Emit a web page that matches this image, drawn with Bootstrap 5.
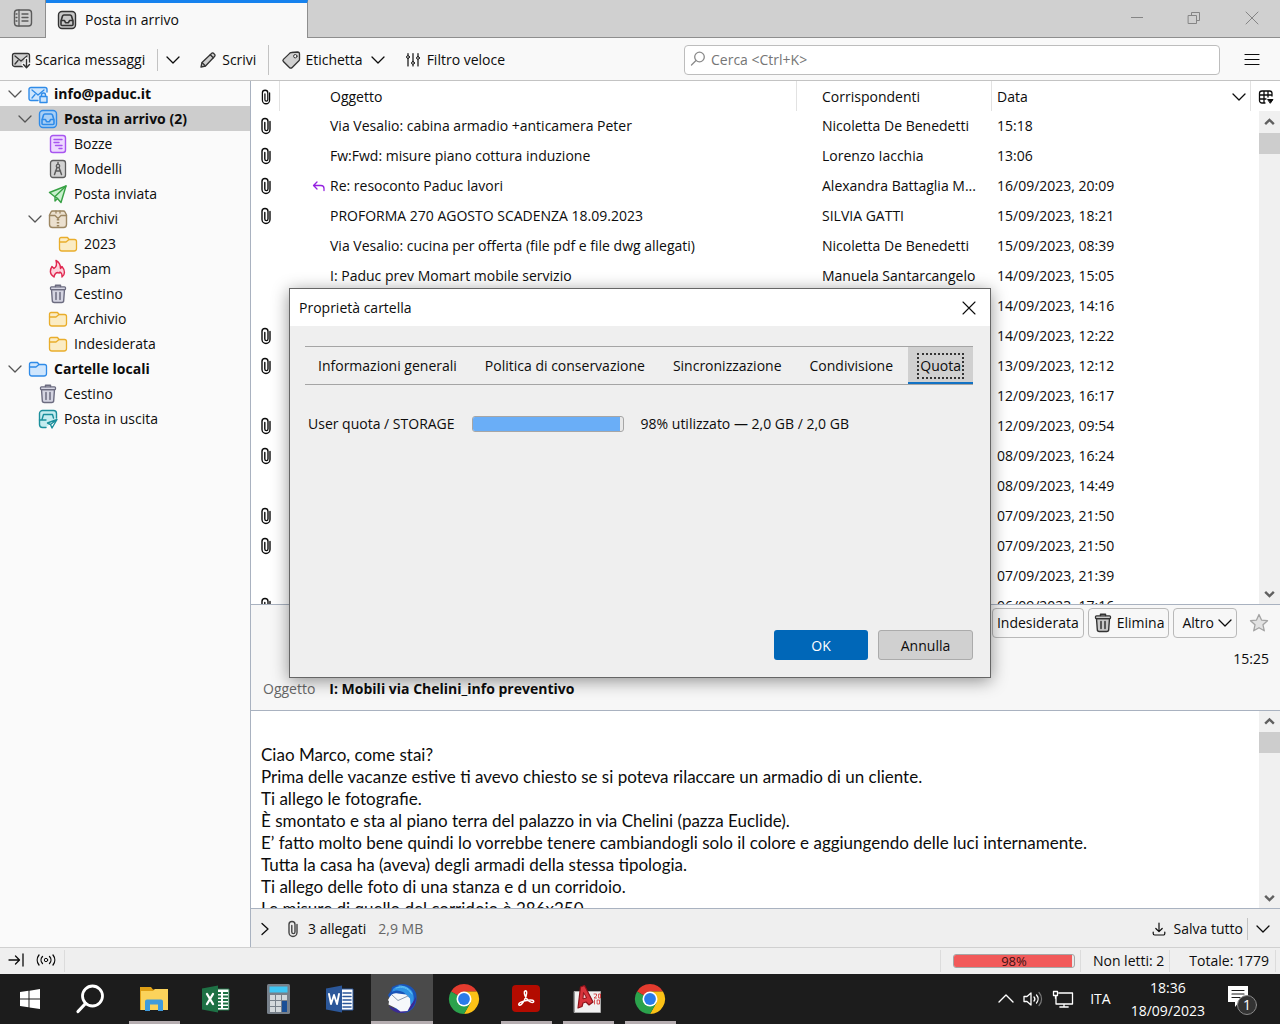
<!DOCTYPE html>
<html lang="it">
<head>
<meta charset="utf-8">
<meta name="viewport" content="width=device-width, initial-scale=1">
<title>Posta in arrivo</title>
<link href="https://cdn.jsdelivr.net/npm/bootstrap@5.3.0/dist/css/bootstrap.min.css" rel="stylesheet">
<style>
body{font-family:"Open Sans","Noto Sans",sans-serif;font-size:14px;line-height:20px;color:#0c0c0c;background:#f9f9f9}
button{color:inherit;background:none;border:0;padding:0}
svg{flex:none;display:block;fill:none;stroke:currentColor;stroke-linecap:round;stroke-linejoin:round}
.i14{width:14px;height:14px}.i16{width:16px;height:16px}.i20{width:20px;height:20px}
.app-shell{height:100vh;overflow:hidden;position:relative}
.titlebar{height:38px;background:#d0d0d0}
.tab-edge{border-bottom:1px solid #8e8e8e}
.spaces{width:46px;border-right:1px solid #8e8e8e;color:#5b5b5b}
.mail-tab{width:262px;background:#f9f9f9;border-top:3px solid #1682ee;border-right:1px solid #8e8e8e;padding:0 0 0 11px;margin-right:-1px;position:relative}
.winctl{color:#858585;width:57px}
.toolbar{height:43px;border-bottom:1px solid #c3c3c3;background:#f9f9f9;padding:2px 20px 0 11px}
.toolbar .gap-a{margin-left:18px}
.toolbar .gap-b{margin-left:12px}
.vsep{width:1px;height:22px;background:#c3c3c3}
.vsep.tall{height:30px}
.searchbox{height:30px;width:536px;border:1px solid #bdbdbd;border-radius:4px;background:#fff;font-size:14px;padding:0 8px 0 26px}
.searchbox::placeholder{color:#767676;opacity:1}
.searchwrap svg{position:absolute;left:6px;top:6px;color:#8a8a8a}
.folders{width:251px;border-right:1px solid #a9b2c0;background:#fafafa}
.folders li{height:25px;display:flex;align-items:center;gap:6px;padding-top:2px}
.folders li a{color:inherit;text-decoration:none;display:flex;align-items:center;gap:6px}
.folders .tw{color:#555;width:14px;height:14px}
.folders .lv0{padding-left:8px}.folders .lv1{padding-left:18px}.folders .lv2{padding-left:28px}
.folders .nt1{padding-left:38px}.folders .nt2{padding-left:48px}.folders .nt3{padding-left:58px}
.picked{background:#cdcdcd}
.c-blue{color:#2f8be8;--f:#cfe6fd}.c-purple{color:#a855f0;--f:#eed9ff}.c-gray{color:#5c5c5c;--f:#d2d2d2}.c-green{color:#36a043;--f:#c9f0cd}
.c-tan{color:#9c8662;--f:#ebe0cf}.c-yel{color:#e9ad2b;--f:#fbecc4}.c-red{color:#e02850;--f:#fcd3dc}.c-slate{color:#6c6c80;--f:#d5d5e2}.c-teal{color:#1b8f9c;--f:#c5ecef}.c-dark{color:#333;--f:#c9c9c9}
.picked .c-blue{--f:#a9cff5}
.pane-list{height:523px;background:#fff;position:relative;overflow:hidden}
.msgs{table-layout:fixed;width:100%;border-collapse:separate;border-spacing:0}
.msgs th{font-weight:400;height:30px;padding:2px 0 0;border-right:1px solid #e2e2e2;vertical-align:middle}
.msgs th:last-child{border-right:0}
.msgs td{height:30px;padding:0;white-space:nowrap;overflow:hidden}
.msgs .att{padding-left:8px}
.msgs .sub{padding-left:50px}
.msgs .who{padding-left:25px}
.msgs .dat{padding-left:5px}
.sub svg{position:absolute;margin-left:-19px;margin-top:3px;color:#9421e0}
.sbar{position:absolute;right:0;bottom:0;width:21px;background:#f0f0f0;color:#606060;display:flex;flex-direction:column;align-items:center}
.sbar .thumb{width:21px;height:21px;background:#cdcdcd}
.msghead{height:107px;border-top:1px solid #a9b2c0;border-bottom:1px solid #a9b2c0;background:#f7f7f7}
.tbtn{height:30px;border:1px solid #b9b9b9;border-radius:4px;white-space:nowrap}
.msgbody{background:#fff;position:relative;overflow:hidden;font-family:Lato,sans-serif;font-size:17px;line-height:22px;padding:33px 30px 0 10px}
.attbar{height:39px;border-top:1px solid #a9b2c0;background:#efefef;padding-top:1px}
.statusbar{height:27px;border-top:1px solid #d0d0d0;background:#efefef}
.statusbar .cellx{border-left:1px solid #dcdcdc;height:22px}
.meter{height:14px;border:1px solid #a6a6a6;border-radius:3px;background:#e8e8e8;position:relative;overflow:hidden}
.meter .progress-bar{transition:none}
.meter .cap{position:absolute;inset:0;text-align:center;line-height:13px;color:#401212;font-size:13px}
.taskbar{height:50px;background:#1c1c1c;color:#fff}
.task{width:62px;height:50px;position:relative;display:flex;align-items:center;justify-content:center}
.task.first{width:60px}
.task.run::after{content:"";position:absolute;bottom:0;left:6px;right:5px;height:3px;background:#b5adb0}
.task.cur{background:#4a4a4a}.task.cur::after{left:0;right:0}
.task svg{width:32px;height:32px}
.overlay{position:absolute;inset:0;padding-top:288px;pointer-events:none}
.dlg{width:702px;height:390px;background:#efefef;border:1px solid #666;box-shadow:0 3px 16px rgba(0,0,0,.42)}
.dlg-title{height:37px;background:#fff;padding:0 14px 0 9px}
.tabrow{margin:20px 17px 0 15px;border-top:1px solid #a5a5a5;border-bottom:1px solid #a5a5a5;height:39px}
.tabrow button{padding:0 15px 0 13px;white-space:nowrap}
.tabrow button.on{background:#d0d0d0;border-bottom:2px solid #1272c4;padding:0 11px;margin-left:auto}
.tabrow .on span{outline:2px dotted #333;display:block;padding:0 1px;line-height:22px;margin-top:2px;height:22px}
.dbtn{height:30px;border-radius:3px;padding-top:1px}
</style>
</head>
<body>
<svg width="0" height="0" class="position-absolute" aria-hidden="true">
<symbol id="clip" viewBox="0 0 14 20"><path d="M3 5v8.500a4 4 0 0 0 8 0V6.500M3 5.500a3 3 0 0 1 6 0v7.500a1.500 1.500 0 0 1-3.200 0V6.500M11 6.500V5.500" stroke-width="1.400"/></symbol>
<symbol id="down" viewBox="0 0 14 14"><path d="M1 4l6 6 6-6" stroke-width="1.300"/></symbol>
<symbol id="sb-up" viewBox="0 0 12 8"><path d="M2 6l4-4 4 4" stroke-width="2.200" stroke-linecap="butt" stroke-linejoin="miter"/></symbol>
<symbol id="sb-dn" viewBox="0 0 12 8"><path d="M2 2l4 4 4-4" stroke-width="2.200" stroke-linecap="butt" stroke-linejoin="miter"/></symbol>
<symbol id="inbox" viewBox="0 0 20 20"><rect x="1.500" y="1.500" width="17" height="17" rx="3.500" fill="var(--f)" stroke-width="1.400"/><path d="M4 11l1.500-5a1.500 1.500 0 0 1 1.400-1h6.200a1.500 1.500 0 0 1 1.400 1l1.500 5v3.500a1 1 0 0 1-1 1H5a1 1 0 0 1-1-1zM4 10.500h3.500l1 2.200h3l1-2.200H16" fill="var(--f)" stroke-width="1.600"/></symbol>
<symbol id="folder" viewBox="0 0 20 20"><path d="M1.500 5V14.500a2.500 2.500 0 0 0 2.500 2.500h12a2.500 2.500 0 0 0 2.500-2.500V7.500a2 2 0 0 0-2-2H11L9.500 3.500H3A1.500 1.500 0 0 0 1.500 5z" fill="var(--f)" stroke-width="1.300"/><path d="M1.500 8H8l3-2.500" stroke-width="1.300"/></symbol>
<symbol id="trash" viewBox="0 0 20 20"><path d="M3.500 5.500l.8 11a2 2 0 0 0 2 2h7.400a2 2 0 0 0 2-2l.8-11z" fill="var(--f)" stroke-width="1.400"/><rect x="2.500" y="2.800" width="15" height="2.900" rx="1" fill="var(--f)" stroke-width="1.300"/><path d="M7.500 2.500V1.300h5v1.200M8 8.500v7M12 8.500v7" stroke-width="1.500"/></symbol>
<symbol id="chrome" viewBox="0 0 32 32"><g stroke="none"><path d="M16 16L3 8.500A15 15 0 0 1 29 8.500H16z" fill="#e33b2e"/><path d="M29 8.500A15 15 0 0 1 16 31l6.500-11.500L16 8.500z" fill="#fbc116"/><path d="M3 8.500A15 15 0 0 0 16 31l6.500-11.300L16 16z" fill="#2ba24c"/><circle cx="16" cy="16" r="7.500" fill="#fff"/><circle cx="16" cy="16" r="5.900" fill="#2a7be9"/></g></symbol>
</svg>
<div class="app-shell d-flex flex-column">
  <header class="titlebar d-flex">
    <button class="spaces tab-edge d-flex align-items-center justify-content-center" aria-label="Spazi"><svg class="i20" viewBox="0 0 20 20"><rect x="1.500" y="2" width="17" height="16" rx="3" stroke-width="1.400"/><path d="M6 2v16M9 6h6M9 9.500h6M9 13h6M3 6h1M3 9.500h1M3 13h1" stroke-width="1.300"/></svg></button>
    <div class="mail-tab d-flex align-items-center"><svg class="i20 c-dark"><use href="#inbox"/></svg><span class="ms-2">Posta in arrivo</span></div>
    <div class="tab-edge flex-grow-1 d-flex justify-content-end">
      <button class="winctl d-flex align-items-center justify-content-center" aria-label="Riduci"><svg class="i16" viewBox="0 0 16 16"><path d="M1 7.500h12" shape-rendering="crispEdges"/></svg></button>
      <button class="winctl d-flex align-items-center justify-content-center" aria-label="Ripristina"><svg class="i16" viewBox="0 0 16 16"><path d="M1.500 5.500h8v8h-8zM4.500 5V2.500h8v8H10" stroke-linejoin="miter"/></svg></button>
      <button class="winctl d-flex align-items-center justify-content-center" aria-label="Chiudi"><svg class="i16" viewBox="0 0 16 16"><path d="M2 2l12 12M14 2L2 14"/></svg></button>
    </div>
  </header>
  <nav class="toolbar d-flex align-items-center flex-shrink-0">
    <button class="d-flex align-items-center gap-1 text-nowrap"><svg class="i20 c-dark" viewBox="0 0 20 20"><rect x="1.500" y="3.500" width="17" height="13" rx="2" fill="#d0d0d0" stroke-width="1.300"/><path d="M4 6l6 5 6-5M4 14l3-3.500" stroke-width="1.300"/><path d="M15.500 9.500v8M12.500 14.500l3 3.200 3-3.200" stroke="#f9f9f9" stroke-width="4"/><path d="M15.500 9.500v8M12.500 14.500l3 3.200 3-3.200" stroke-width="1.400"/></svg>Scarica messaggi</button>
    <span class="vsep gap-b"></span>
    <button class="ms-2" aria-label="Altri account"><svg class="i14"><use href="#down"/></svg></button>
    <button class="d-flex align-items-center gap-1 gap-a"><svg class="i20 c-dark" viewBox="0 0 20 20"><path d="M3 17l1-4.500L13.500 3.500a1.500 1.500 0 0 1 2.300 0l.7.700a1.500 1.500 0 0 1 0 2.300L7.500 16z" fill="#d0d0d0" stroke-width="1.300"/><path d="M12.300 4.800l3 3M4.200 12.800l3 3" stroke-width="1.300"/></svg>Scrivi</button>
    <span class="vsep tall gap-b"></span>
    <button class="d-flex align-items-center ms-2 ps-1"><svg class="i20 c-dark" viewBox="0 0 20 20"><path d="M10.500 2.500l6-.500a2 2 0 0 1 2 2v5.500a2 2 0 0 1-.6 1.300l-6.700 6.700a2 2 0 0 1-2.800 0l-6-6a1.500 1.500 0 0 1 0-2.100l6.500-6.300a2.500 2.500 0 0 1 1.600-.6z" fill="#d0d0d0" stroke-width="1.300"/><circle cx="14.300" cy="6.200" r="1.700" fill="#f9f9f9"/></svg><span class="ms-1">Etichetta</span><svg class="i14 ms-2"><use href="#down"/></svg></button>
    <button class="d-flex align-items-center gap-1 gap-a"><svg class="i20" viewBox="0 0 20 20"><path d="M5 3.500v1.500m0 3.500v7.500M10 3.500v8m0 3.500v1M15 3.500v3m0 3.500v6" stroke-width="1.200"/><circle cx="5" cy="7" r="1.400"/><circle cx="10" cy="13" r="1.400"/><circle cx="15" cy="8" r="1.400"/></svg>Filtro veloce</button>
    <div class="searchwrap position-relative ms-auto"><input type="search" class="searchbox" placeholder="Cerca &lt;Ctrl+K&gt;" aria-label="Cerca"><svg class="i16" viewBox="0 0 16 16"><circle cx="9.500" cy="6" r="4.800" stroke-width="1.300"/><path d="M6 9.500L1.500 14" stroke-width="1.300"/></svg></div>
    <button class="d-flex ms-4" aria-label="Menu"><svg class="i16" viewBox="0 0 16 16"><path d="M1 2.500h14M1 7.500h14M1 12.500h14" stroke-width="1.200"/></svg></button>
  </nav>

  <main class="d-flex flex-grow-1" style="min-height:0">
    <ul class="folders list-unstyled mb-0 flex-shrink-0">
      <li class="lv0 fw-bold"><svg class="tw"><use href="#down"/></svg><a href="#"><svg class="i20 c-blue" viewBox="0 0 20 20"><path d="M10 16.500H3a2 2 0 0 1-2-2v-9a2 2 0 0 1 2-2h14a2 2 0 0 1 2 2V8" fill="var(--f)" stroke-width="1.400"/><path d="M4 6l6 5 6-5M4 14l3-3.500" stroke-width="1.300"/><path d="M13.500 12.500v-1.500a2 2 0 0 1 4 0v1.500M12 12.500h7v6h-7z" fill="var(--f)" stroke-width="1.400"/></svg>info@paduc.it</a></li>
      <li class="lv1 picked fw-bold"><svg class="tw"><use href="#down"/></svg><a href="#"><svg class="i20 c-blue"><use href="#inbox"/></svg>Posta in arrivo (2)</a></li>
      <li class="nt2"><a href="#"><svg class="i20 c-purple" viewBox="0 0 20 20"><rect x="2.500" y="1.500" width="15" height="17" rx="2.500" fill="var(--f)" stroke-width="1.400"/><path d="M6 5.500h8M6 8.500h5M7.500 11.500H14M11 14.500h3" stroke-width="1.400"/></svg>Bozze</a></li>
      <li class="nt2"><a href="#"><svg class="i20 c-gray" viewBox="0 0 20 20"><rect x="2.500" y="1.500" width="15" height="17" rx="2.500" fill="var(--f)" stroke-width="1.300"/><path d="M9 8.500L6.500 15.500M11 8.500l2.500 7M7.500 12h5M10 3.500v1.500" stroke-width="1.500"/><circle cx="10" cy="7" r="1.700" stroke-width="1.300"/></svg>Modelli</a></li>
      <li class="nt2"><a href="#"><svg class="i20 c-green" viewBox="0 0 20 20"><path d="M18 2L1.500 8.500 6.500 12.500 9 14l4 4.500z" fill="var(--f)" stroke-width="1.400"/><path d="M18 2L7 12.500V17l2.500-2.500" stroke-width="1.400"/></svg>Posta inviata</a></li>
      <li class="lv2"><svg class="tw"><use href="#down"/></svg><a href="#"><svg class="i20 c-tan" viewBox="0 0 20 20"><path d="M1.500 6l1.500-3a2 2 0 0 1 1.800-1h10.400A2 2 0 0 1 17 3l1.500 3v9.500a3 3 0 0 1-3 3h-11a3 3 0 0 1-3-3z" fill="var(--f)" stroke-width="1.400"/><path d="M1.500 6.500H7l3 3 3-3h5.500M8 2v2M12 2v2" stroke-width="1.300"/><path d="M10 10v8" stroke-width="2.500" stroke-dasharray="1.500 1.500" stroke-linecap="butt"/></svg>Archivi</a></li>
      <li class="nt3"><a href="#"><svg class="i20 c-yel"><use href="#folder"/></svg>2023</a></li>
      <li class="nt2"><a href="#"><svg class="i20 c-red" viewBox="0 0 20 20"><path d="M6 18C1 15 2 10.500 4 7.500l2 2C8.500 8 9 5 8 1.500c4 2 4.500 4.500 4.500 8l1.500-2c3.500 4 3 8.500 0 10.500.500-2.500-.5-4-2-5-.5 1-1 1.500-2 .5-2.500 0-3.500 2-4 4.500z" fill="var(--f)" stroke-width="1.400"/></svg>Spam</a></li>
      <li class="nt2"><a href="#"><svg class="i20 c-slate"><use href="#trash"/></svg>Cestino</a></li>
      <li class="nt2"><a href="#"><svg class="i20 c-yel"><use href="#folder"/></svg>Archivio</a></li>
      <li class="nt2"><a href="#"><svg class="i20 c-yel"><use href="#folder"/></svg>Indesiderata</a></li>
      <li class="lv0 fw-bold"><svg class="tw"><use href="#down"/></svg><a href="#"><svg class="i20 c-blue"><use href="#folder"/></svg>Cartelle locali</a></li>
      <li class="nt1"><a href="#"><svg class="i20 c-slate"><use href="#trash"/></svg>Cestino</a></li>
      <li class="nt1"><a href="#"><svg class="i20 c-teal" viewBox="0 0 20 20"><path d="M8 18.500H4.500a3 3 0 0 1-3-3v-11a3 3 0 0 1 3-3h11a3 3 0 0 1 3 3V9" fill="var(--f)" stroke-width="1.400"/><path d="M4 10.500l1.500-5h9l1 3.500M1.500 11H8" stroke-width="1.400"/><path d="M19 10.500l-9.500 3.500 3 1.500 1.500 3.500zM12.500 15.500L19 10.500" fill="#fff" stroke-width="1.400"/></svg>Posta in uscita</a></li>
    </ul>

    <section class="flex-grow-1 d-flex flex-column" style="min-width:0">
      <div class="pane-list flex-shrink-0">
        <table class="msgs">
          <colgroup><col style="width:29px"><col><col style="width:195px"><col style="width:259px"><col style="width:29px"></colgroup>
          <thead><tr><th class="att"><svg width="14" height="18"><use href="#clip"/></svg></th><th class="sub">Oggetto</th><th class="who">Corrispondenti</th><th class="dat"><span class="d-flex align-items-center justify-content-between pe-1"><span>Data</span><svg class="i14"><use href="#down"/></svg></span></th><th><svg class="i16 mx-auto" viewBox="0 0 16 16"><path d="M7 14H4a2.500 2.500 0 0 1-2.500-2.500V4.500A2.500 2.500 0 0 1 4 2h7.500A2.500 2.500 0 0 1 14 4.500V7M1.500 6H14M1.500 10H8M6 2v12M10 2v6" stroke-width="1.300"/><path d="M10 10.500h5l-2.500 3.500z" fill="currentColor"/></svg></th></tr></thead>
          <tbody>
          <tr><td class="att"><svg width="14" height="20"><use href="#clip"/></svg></td><td class="sub">Via Vesalio: cabina armadio +anticamera Peter</td><td class="who">Nicoletta De Benedetti</td><td class="dat">15:18</td><td></td></tr>
          <tr><td class="att"><svg width="14" height="20"><use href="#clip"/></svg></td><td class="sub">Fw:Fwd: misure piano cottura induzione</td><td class="who">Lorenzo Iacchia</td><td class="dat">13:06</td><td></td></tr>
          <tr><td class="att"><svg width="14" height="20"><use href="#clip"/></svg></td><td class="sub"><svg width="14" height="14" viewBox="0 0 14 14"><path d="M6 3L2.500 6.500 6 10M2.500 6.500H10a3 3 0 0 1 3 3v2" stroke-width="1.300"/></svg>Re: resoconto Paduc lavori</td><td class="who">Alexandra Battaglia M...</td><td class="dat">16/09/2023, 20:09</td><td></td></tr>
          <tr><td class="att"><svg width="14" height="20"><use href="#clip"/></svg></td><td class="sub">PROFORMA 270 AGOSTO SCADENZA 18.09.2023</td><td class="who">SILVIA GATTI</td><td class="dat">15/09/2023, 18:21</td><td></td></tr>
          <tr><td></td><td class="sub">Via Vesalio: cucina per offerta (file pdf e file dwg allegati)</td><td class="who">Nicoletta De Benedetti</td><td class="dat">15/09/2023, 08:39</td><td></td></tr>
          <tr><td></td><td class="sub">I: Paduc prev Momart mobile servizio</td><td class="who">Manuela Santarcangelo</td><td class="dat">14/09/2023, 15:05</td><td></td></tr>
          <tr><td></td><td></td><td></td><td class="dat">14/09/2023, 14:16</td><td></td></tr>
          <tr><td class="att"><svg width="14" height="20"><use href="#clip"/></svg></td><td></td><td></td><td class="dat">14/09/2023, 12:22</td><td></td></tr>
          <tr><td class="att"><svg width="14" height="20"><use href="#clip"/></svg></td><td></td><td></td><td class="dat">13/09/2023, 12:12</td><td></td></tr>
          <tr><td></td><td></td><td></td><td class="dat">12/09/2023, 16:17</td><td></td></tr>
          <tr><td class="att"><svg width="14" height="20"><use href="#clip"/></svg></td><td></td><td></td><td class="dat">12/09/2023, 09:54</td><td></td></tr>
          <tr><td class="att"><svg width="14" height="20"><use href="#clip"/></svg></td><td></td><td></td><td class="dat">08/09/2023, 16:24</td><td></td></tr>
          <tr><td></td><td></td><td></td><td class="dat">08/09/2023, 14:49</td><td></td></tr>
          <tr><td class="att"><svg width="14" height="20"><use href="#clip"/></svg></td><td></td><td></td><td class="dat">07/09/2023, 21:50</td><td></td></tr>
          <tr><td class="att"><svg width="14" height="20"><use href="#clip"/></svg></td><td></td><td></td><td class="dat">07/09/2023, 21:50</td><td></td></tr>
          <tr><td></td><td></td><td></td><td class="dat">07/09/2023, 21:39</td><td></td></tr>
          <tr><td class="att"><svg width="14" height="20"><use href="#clip"/></svg></td><td></td><td></td><td class="dat">06/09/2023, 17:16</td><td></td></tr>
          </tbody>
        </table>
        <div class="sbar" style="top:30px"><svg width="13" height="22"><use href="#sb-up"/></svg><div class="thumb"></div><svg class="mt-auto" width="13" height="20"><use href="#sb-dn"/></svg></div>
      </div>

      <div class="msghead flex-shrink-0 d-flex flex-column">
        <div class="d-flex justify-content-end align-items-center" style="gap:4px;padding:3px 11px 0 0">
          <button class="tbtn px-1">Indesiderata</button>
          <button class="tbtn d-flex align-items-center px-1 gap-1"><svg class="i20 c-dark"><use href="#trash"/></svg>Elimina</button>
          <button class="tbtn d-flex align-items-center gap-1 px-1 me-2"><span class="ps-1">Altro</span><svg class="i14"><use href="#down"/></svg></button>
          <svg class="i20" viewBox="0 0 20 20" style="color:#a4a4a4"><path d="M10 1.500l2.500 5.600 6 .6-4.500 4.100 1.300 6L10 14.700l-5.300 3.100 1.300-6L1.500 7.700l6-.6z" fill="#e2e2e2" stroke-width="1.300"/></svg>
        </div>
        <div class="text-end" style="padding:11px 11px 0 0">15:25</div>
        <div class="d-flex" style="padding:10px 0 0 12px;gap:14px"><span style="color:#666">Oggetto</span><b>I: Mobili via Chelini_info preventivo</b></div>
      </div>

      <div class="msgbody flex-grow-1">
        <div class="text-nowrap">Ciao Marco, come stai?</div>
        <div class="text-nowrap">Prima delle vacanze estive ti avevo chiesto se si poteva rilaccare un armadio di un cliente.</div>
        <div class="text-nowrap">Ti allego le fotografie.</div>
        <div class="text-nowrap">È smontato e sta al piano terra del palazzo in via Chelini (pazza Euclide).</div>
        <div class="text-nowrap">E’ fatto molto bene quindi lo vorrebbe tenere cambiandogli solo il colore e aggiungendo delle luci internamente.</div>
        <div class="text-nowrap">Tutta la casa ha (aveva) degli armadi della stessa tipologia.</div>
        <div class="text-nowrap">Ti allego delle foto di una stanza e d un corridoio.</div>
        <div class="text-nowrap">Le misure di quello del corridoio è 286x250</div>
        <div class="sbar" style="top:0"><svg width="13" height="21"><use href="#sb-up"/></svg><div class="thumb"></div><svg class="mt-auto" width="13" height="20"><use href="#sb-dn"/></svg></div>
      </div>

      <div class="attbar flex-shrink-0 d-flex align-items-center">
        <button class="ms-2" aria-label="Espandi"><svg width="14" height="14" viewBox="0 0 14 14"><path d="M3 1.500l6 5.500-6 5.500" stroke-width="1.300"/></svg></button>
        <svg width="14" height="22" style="color:#444;margin-left:13px"><use href="#clip"/></svg><span class="ms-1 ps-1 pe-1">3 allegati</span><span class="ms-2 ps-0" style="color:#666">2,9 MB</span>
        <button class="ms-auto d-flex align-items-center gap-2"><svg width="14" height="14" viewBox="0 0 14 14"><path d="M7 1v8.500M3.800 6.500L7 9.700l3.200-3.200M1.200 10v1.500a1.500 1.500 0 0 0 1.500 1.500h8.600a1.500 1.500 0 0 0 1.500-1.500V10" stroke-width="1.200"/></svg>Salva tutto</button>
        <span class="vsep ms-1"></span>
        <button class="ms-2 me-2" style="padding-right:2px" aria-label="Altre azioni"><svg width="14" height="14"><use href="#down"/></svg></button>
      </div>
    </section>
  </main>

  <footer class="statusbar flex-shrink-0 d-flex align-items-center text-nowrap">
    <button class="ms-2" aria-label="Vai"><svg class="i16" viewBox="0 0 16 16"><path d="M1 7h10M7.500 3l4 4-4 4M15 1v12" stroke-width="1.300"/></svg></button>
    <button class="ms-2" style="padding-left:3px;padding-right:7px" aria-label="In linea"><svg width="22" height="16" viewBox="0 0 22 16"><circle cx="11" cy="7" r="1.700"/><path d="M7.500 3.500a5 5 0 0 0 0 7M14.500 3.500a5 5 0 0 1 0 7M4 2a8 8 0 0 0 0 10M18 2a8 8 0 0 1 0 10" stroke-width="1.300"/></svg></button>
    <span class="cellx"></span>
    <div class="cellx ms-auto d-flex align-items-center" style="padding:0 5px 0 12px"><div class="progress meter" style="width:122px" role="progressbar" aria-valuenow="98" aria-label="Quota"><div class="progress-bar" style="width:98%;background:#f25a5a"></div><span class="cap">98%</span></div></div>
    <div class="cellx d-flex align-items-center" style="padding:0 5px 0 12px">Non letti: 2</div>
    <div class="cellx d-flex align-items-center" style="padding:0 6px 0 19px">Totale: 1779</div>
    <span class="cellx pe-1"></span>
  </footer>

  <div class="taskbar flex-shrink-0 d-flex align-items-center">
    <button class="task first" aria-label="Start"><svg style="width:20px;height:20px" viewBox="0 0 20 20"><path d="M0 3l8.500-1.200v7.700H0zM9.500 1.700L20 0v9.500H9.500zM0 10.500h8.500v7.700L0 17zM9.500 10.500H20V20L9.500 18.400z" fill="#fff" stroke="none"/></svg></button>
    <button class="task first" style="margin-right:3px" aria-label="Cerca"><svg viewBox="0 0 32 32"><circle cx="18.500" cy="13" r="10" stroke-width="2.800"/><path d="M11.500 20.500L4 28.500" stroke-width="3.200"/></svg></button>
    <button class="task run" aria-label="Esplora file"><svg viewBox="0 0 32 32"><g stroke="none"><path d="M2 4h11l2 2.500h15V27H2z" fill="#dfa016"/><path d="M3 8h12l2-2h13v21H3z" fill="#fbd35b"/><path d="M7 28V18.500a2 2 0 0 1 2-2h14a2 2 0 0 1 2 2V28h-5v-6.500h-8V28z" fill="#3f9bdc"/></g></svg></button>
    <button class="task" aria-label="Excel"><svg viewBox="0 0 32 32"><path d="M16 6h13v21H16z" fill="#fff" stroke="#1e7145"/><path d="M18 10h3m2 0h5M18 13.500h3m2 0h5M18 17h3m2 0h5M18 20.500h3m2 0h5M18 24h3m2 0h5" stroke="#1e7145" stroke-width="2" stroke-linecap="butt"/><path d="M2 5.500L18 2.500v27L2 26.500z" fill="#1e7145" stroke="none"/><path d="M7 11l6 10M13 11L7 21" stroke="#fff" stroke-width="2.300"/></svg></button>
    <button class="task" aria-label="Calcolatrice"><svg viewBox="0 0 32 32"><g stroke="none"><rect x="5" y="1" width="23" height="30" rx="1.500" fill="#77808a"/><path d="M7.500 3.500h18v6h-18z" fill="#3ec5f3"/><path d="M8 12h5v5H8zM14 12h5v5h-5zM20 12h5v5h-5zM8 18h5v5H8zM14 18h5v5h-5zM8 24h5v5H8zM14 24h5v5h-5z" fill="#d3d8dc"/><path d="M20 18h5v11h-5z" fill="#1a4f96"/></g></svg></button>
    <button class="task" aria-label="Word"><svg viewBox="0 0 32 32"><path d="M16 6h13v21H16z" fill="#fff" stroke="#2b579a"/><path d="M19 10h8M19 13.500h8M19 17h8M19 20.500h8M19 24h8" stroke="#2b579a" stroke-width="1.500"/><path d="M2 5.500L18 2.500v27L2 26.500z" fill="#2b579a" stroke="none"/><path d="M5 11l2 10 3-9 3 9 2-10" stroke="#fff" stroke-width="1.900"/></svg></button>
    <button class="task run cur" aria-label="Thunderbird"><svg viewBox="0 0 32 32"><g stroke="none"><path d="M2 12L5 8l1-4 5-2c8-3 16 1 19 8 2 8-1 16-8 19-5 2-9 1-12-1z" fill="#1a54b8"/><path d="M7 6c6-5 14-4 19 2 3 6 2 13-2 17 1-8-2-13-7-16-4-2-8-2-11 0z" fill="#2f93e4"/><path d="M30 14c0 9-7 16-15 16-6 0-10-3-12-7l9 4c8 1 14-5 18-13z" fill="#3b2a94"/><path d="M4 13.500c2-3 5-4 8-3l8 1 4 4 .5 7-3 5.500-7 .5-4-3-8-4 .5-3L2 17z" fill="#f6f8fb"/></g><path d="M6 12l6 5.500L22 13" stroke="#8c9bb0" stroke-width="1"/><path d="M10 5c6-2 12 0 15 5M13 3c6 0 11 3 13 8" stroke="#5cbcf3" stroke-width="1"/></svg></button>
    <button class="task" aria-label="Chrome"><svg><use href="#chrome"/></svg></button>
    <button class="task run" aria-label="Acrobat"><svg viewBox="0 0 32 32"><rect x="2" y="2" width="28" height="27" rx="4" fill="#b30b00" stroke="none"/><path d="M15 8c2.500-1 2 4-.5 9-2 4-4.500 6-5.500 5-1.500-2 4-4 9-4.800 4-.7 6.500.3 5.500 1.800-1.200 1.500-5-.5-7-3.500C14.500 12.500 13.500 8.600 15 8z" stroke="#fff" stroke-width="1.500"/></svg></button>
    <button class="task run" aria-label="AutoCAD"><svg viewBox="0 0 32 32"><path d="M2.500 8.500h26v21h-26z" fill="#f1f1f1" stroke="#aaa"/><path d="M6 25L8.500 4l4-1.500L21 19l-4 3-3-3-3 1-1 3.500z" fill="#d8343c" stroke="#8c1219" stroke-width="1.200"/><path d="M11 15.500l.5-6 3 5z" fill="#f1d0d0" stroke="#8c1219"/><path d="M22 11h2.500v2L22 15h2.500M27 11h1.500v4H27zM22.500 17v4M25.500 17h2v4h-2z" stroke="#d02a2a" stroke-width=".8"/></svg></button>
    <button class="task run" aria-label="Chrome"><svg><use href="#chrome"/></svg></button>
    <div class="ms-auto d-flex align-items-center">
      <svg class="i16" viewBox="0 0 16 16"><path d="M1 11l7-7 7 7" stroke-width="1.400"/></svg>
      <svg class="ms-2 me-2" width="22" height="18" viewBox="0 0 22 18"><path d="M2 6.500h3l4-3.500v12l-4-3.500H2zM12 7a3 3 0 0 1 0 4M14.500 5a6 6 0 0 1 0 8" stroke-width="1.300"/><path d="M17 2.500a9.500 9.500 0 0 1 0 13" stroke="#777" stroke-width="1.200"/></svg>
      <svg width="22" height="20" viewBox="0 0 22 20"><path d="M7 4h13.500v11H4V8M12 15v3M8 18h8M1.500 2.500h4v4h-4zM3.500 6.500V9" stroke-width="1.300" stroke-linecap="square"/></svg>
      <span class="ms-3">ITA</span>
      <div class="text-center" style="margin-left:20px;line-height:23px">18:36<br>18/09/2023</div>
      <button style="margin:0 23px 0 22px" aria-label="Notifiche"><svg width="30" height="32" viewBox="0 0 30 32"><path d="M1 3h20v16h-9l-4 5v-5H1z" fill="#fff" stroke="none"/><path d="M5 7.500h12M5 11h12M5 14.500h8" stroke="#1c1c1c" stroke-width="1.200"/><circle cx="20" cy="22" r="9.500" fill="#333" stroke="#8a8a8a"/><text x="20" y="27" text-anchor="middle" fill="#fff" stroke="none" font-size="14">1</text></svg></button>
    </div>
  </div>

  <div class="overlay d-flex justify-content-center align-items-start">
    <div class="dlg d-flex flex-column" role="dialog" aria-labelledby="dt">
      <div class="dlg-title d-flex align-items-center justify-content-between"><span id="dt">Proprietà cartella</span><button aria-label="Chiudi"><svg width="14" height="14" viewBox="0 0 14 14"><path d="M1 1l12 12M13 1L1 13" stroke-width="1.100"/></svg></button></div>
      <div class="tabrow d-flex" role="tablist"><button role="tab">Informazioni generali</button><button role="tab">Politica di conservazione</button><button role="tab">Sincronizzazione</button><button role="tab">Condivisione</button><button role="tab" class="on" aria-selected="true"><span>Quota</span></button></div>
      <div class="d-flex align-items-center" style="margin:29px 18px 0;gap:17px"><span>User quota / STORAGE</span><div class="progress meter" style="width:152px;height:16px" role="progressbar" aria-valuenow="98" aria-label="Quota"><div class="progress-bar" style="width:98%;background:#6aaef7"></div></div><span>98% utilizzato — 2,0 GB / 2,0 GB</span></div>
      <div class="d-flex justify-content-end mt-auto" style="gap:10px;padding:0 17px 17px"><button class="dbtn text-white" style="width:94px;background:#0067b8">OK</button><button class="dbtn" style="width:95px;background:#d0d0d0;border:1px solid #ababab">Annulla</button></div>
    </div>
  </div>
</div>
<script src="https://cdn.jsdelivr.net/npm/bootstrap@5.3.0/dist/js/bootstrap.bundle.min.js"></script>
</body>
</html>
